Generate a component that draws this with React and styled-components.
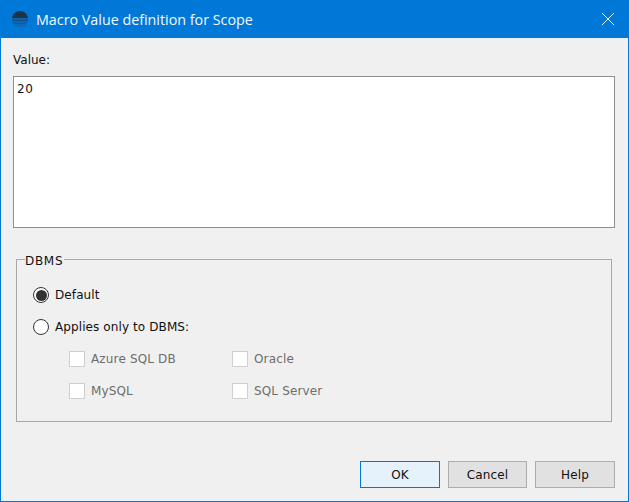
import React from "react";
import styled, { createGlobalStyle } from "styled-components";

const Global = createGlobalStyle`
  html, body { margin: 0; padding: 0; background: #f0f0f0; }
  #root { width: 629px; height: 502px; }
  * { box-sizing: border-box; }
`;

const Win = styled.div`
  width: 629px; height: 502px;
  display: flex; flex-direction: column;
  background: #f0f0f0;
  border: 1px solid #0078d7;
  border-top: 0;
  font-family: "DejaVu Sans", sans-serif;
  font-size: 12px;
  color: #111;
`;
const TitleBar = styled.div`
  height: 38px; flex: none;
  background: #0078d7;
  display: flex; align-items: center;
  padding-left: 11px;
  color: #fff;
`;
const TitleText = styled.div`
  font-family: "Open Sans", sans-serif;
  font-size: 14.3px;
  margin-left: 8px;
  flex: 1;
  color: #f2f8fd;
`;
const CloseBtn = styled.div`
  width: 40px; height: 38px;
  display: flex; align-items: center; justify-content: center;
`;
const Body = styled.div`
  flex: 1;
  display: flex; flex-direction: column;
  padding: 14px 13px 13px 12px;
`;
const FieldLabel = styled.div`
  height: 24px;
  line-height: 16px;
`;
const ValueBox = styled.div`
  height: 152px;
  background: #fff;
  border: 1px solid #8a8f94;
  padding: 4px 3px;
  line-height: 16px;
  letter-spacing: 0.6px;
`;
const Group = styled.fieldset`
  margin: 22px 3px 0 3px;
  padding: 0;
  height: 172px;
  border: 1px solid #a8a8a8;
  min-width: 0;
`;
const Legend = styled.legend`
  margin-left: 8px;
  padding: 4px 1px 0 0;
  line-height: 14px;
  letter-spacing: 0.7px;
`;
const RadioList = styled.div`
  display: flex; flex-direction: column;
  padding: 11px 0 0 16px;
`;
const RadioRow = styled.div`
  height: 32px;
  display: flex; align-items: center; gap: 6px;
  letter-spacing: 0.1px;
`;
const RadioDot = styled.span`
  width: 16px; height: 16px; flex: none;
  border-radius: 50%;
  border: 1px solid #333;
  background: #fff;
  display: flex; align-items: center; justify-content: center;
  &::after {
    content: "";
    display: ${p => (p.$on ? "block" : "none")};
    width: 11px; height: 11px;
    border-radius: 50%;
    background: #333;
  }
`;
const CheckGrid = styled.div`
  display: grid;
  grid-template-columns: 163px 1fr;
  grid-auto-rows: 32px;
  padding-left: 52px;
`;
const CheckItem = styled.div`
  display: flex; align-items: center; gap: 6px;
  color: #6d6d6d;
  letter-spacing: 0.15px;
`;
const CheckBox = styled.span`
  width: 16px; height: 16px; flex: none;
  background: #fff;
  border: 1px solid #cfcfcf;
`;
const Footer = styled.div`
  margin-top: auto;
  display: flex; justify-content: flex-end; gap: 8px;
`;
const Btn = styled.div`
  width: ${p => p.$w}px; height: 27px;
  display: flex; align-items: center; justify-content: center;
  background: ${p => (p.$primary ? "#e5f1fb" : "#e1e1e1")};
  border: 1px solid ${p => (p.$primary ? "#0078d7" : "#adadad")};
  letter-spacing: 0.1px;
`;

const AppIcon = () => (
  <svg width="16" height="16" viewBox="0 0 16 16">
    <defs>
      <clipPath id="c"><circle cx="8" cy="8" r="8" /></clipPath>
    </defs>
    <g clipPath="url(#c)">
      <rect x="0" y="0" width="16" height="7" fill="#1e3346" />
      <rect x="0" y="7" width="16" height="1.5" fill="#0a66b0" />
      <rect x="0" y="8.5" width="16" height="2" fill="#11508a" />
      <rect x="0" y="10.5" width="16" height="1" fill="#0a6cbb" />
      <rect x="0" y="11.5" width="16" height="2" fill="#125a99" />
      <rect x="0" y="13.5" width="16" height="3" fill="#0d68b3" />
    </g>
  </svg>
);

export default function App() {
  return (
    <>
      <Global />
      <Win>
        <TitleBar>
          <AppIcon />
          <TitleText>Macro Value definition for Scope</TitleText>
          <CloseBtn>
            <svg width="14" height="14" viewBox="0 0 14 14">
              <path d="M1 1L13 13M13 1L1 13" stroke="#fff" strokeWidth="1" fill="none" />
            </svg>
          </CloseBtn>
        </TitleBar>
        <Body>
          <FieldLabel>Value:</FieldLabel>
          <ValueBox>20</ValueBox>
          <Group>
            <Legend>DBMS</Legend>
            <RadioList>
              <RadioRow><RadioDot $on />Default</RadioRow>
              <RadioRow><RadioDot />Applies only to DBMS:</RadioRow>
            </RadioList>
            <CheckGrid>
              <CheckItem><CheckBox />Azure SQL DB</CheckItem>
              <CheckItem><CheckBox />Oracle</CheckItem>
              <CheckItem><CheckBox />MySQL</CheckItem>
              <CheckItem><CheckBox />SQL Server</CheckItem>
            </CheckGrid>
          </Group>
          <Footer>
            <Btn $primary $w={80}>OK</Btn>
            <Btn $w={79}>Cancel</Btn>
            <Btn $w={80}>Help</Btn>
          </Footer>
        </Body>
      </Win>
    </>
  );
}
